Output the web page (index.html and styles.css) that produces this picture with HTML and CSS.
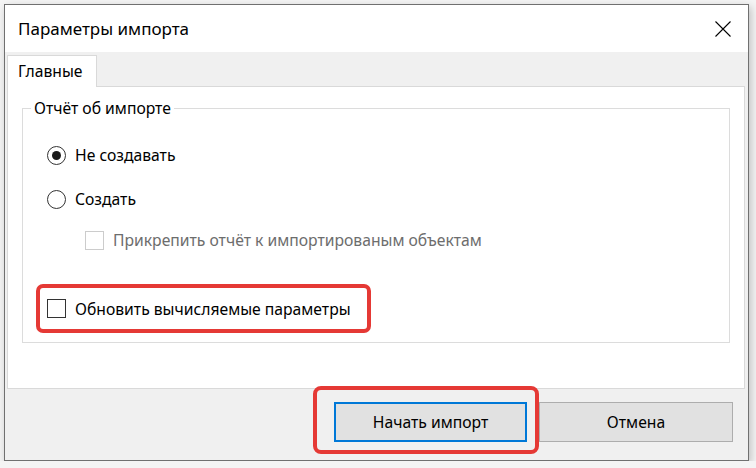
FILE: index.html
```html
<!DOCTYPE html>
<html>
<head>
	<meta charset="UTF-8">
	<title>Параметры импорта</title>
	<link rel="stylesheet" href="styles.css">
</head>
<body>
	<div class="window">
		<div class="titlebar">
			<span class="title">Параметры импорта</span>
			<span class="close">
				<svg width="16" height="16" viewBox="0 0 16 16">
					<path d="M0.5 0.5 L15.5 15.5 M15.5 0.5 L0.5 15.5" stroke="#000" stroke-width="1.1" fill="none"/>
				</svg>
			</span>
		</div>
		<div class="client">
			<div class="tabs">
				<div class="tab">Главные</div>
			</div>
			<div class="panel">
				<fieldset class="group">
					<legend>Отчёт об импорте</legend>
					<div class="row row-first">
						<span class="radio checked"></span>
						<span>Не создавать</span>
					</div>
					<div class="row row-second">
						<span class="radio"></span>
						<span>Создать</span>
					</div>
					<div class="row row-sub disabled">
						<span class="check"></span>
						<span>Прикрепить отчёт к импортированым объектам</span>
					</div>
					<div class="mark mark-row">
						<div class="row">
							<span class="check"></span>
							<span>Обновить вычисляемые параметры</span>
						</div>
					</div>
				</fieldset>
			</div>
			<div class="footer">
				<span class="mark-btn">
					<button type="button" class="btn btn-default">Начать импорт</button>
				</span>
				<button type="button" class="btn">Отмена</button>
			</div>
		</div>
	</div>
</body>
</html>
```

FILE: styles.css
```css
* {
	margin: 0;
	padding: 0;
	box-sizing: border-box;
}

body {
	background-color: #f4f4f4;
	padding: 4px 0 0 4px;
	font-family: "Noto Sans", "Open Sans", sans-serif;
	font-size: 15.7px;
	color: #000;
}

.window {
	width: 745px;
	height: 457px;
	border: 1px solid #707070;
	background-color: #f0f0f0;
	box-shadow: 2px 3px 8px rgba(0, 0, 0, 0.22);
	display: flex;
	flex-direction: column;
}

.titlebar {
	height: 47px;
	background-color: #ffffff;
	display: flex;
	align-items: center;
	justify-content: space-between;
	padding: 0 17px 0 13px;
}

.title {
	font-size: 17px;
}

.close {
	display: flex;
}

.client {
	flex: 1;
	display: flex;
	flex-direction: column;
}

.tabs {
	display: flex;
	padding: 3px 0 0 2px;
}

.tab {
	width: 90px;
	height: 32px;
	margin-bottom: -1px;
	background-color: #ffffff;
	border: 1px solid #d9d9d9;
	border-bottom: none;
	padding: 4px 0 0 10px;
	position: relative;
	z-index: 1;
}

.panel {
	height: 303px;
	margin: 0 3px 0 2px;
	background-color: #ffffff;
	border: 1px solid #d9d9d9;
	padding: 11px 14px 0 14px;
}

.group {
	border: 1px solid #dcdcdc;
	height: 245px;
	padding: 22px 0 0 0;
	min-width: 0;
}

.group legend {
	margin-left: 8px;
	padding: 0 3px;
	line-height: 20px;
}

.row {
	display: flex;
	align-items: center;
	height: 30px;
	padding-left: 24px;
}

.row-second {
	margin-top: 14px;
}

.row-sub {
	margin-top: 11px;
	padding-left: 62px;
}

.disabled {
	color: #6d6d6d;
}

.radio {
	width: 19px;
	height: 19px;
	border: 1.5px solid #333333;
	border-radius: 50%;
	margin-right: 9px;
	display: flex;
	align-items: center;
	justify-content: center;
}

.radio.checked:after {
	content: "";
	width: 9px;
	height: 9px;
	border-radius: 50%;
	background-color: #1a1a1a;
}

.check {
	width: 19px;
	height: 19px;
	border: 1.5px solid #333333;
	background-color: #fff;
	margin-right: 9px;
}

.disabled .check {
	border-color: #cccccc;
}

.mark {
	border: 4px solid #e53935;
	border-radius: 7px;
}

.mark-row {
	width: 335px;
	height: 49px;
	margin: 29px 0 0 13px;
	display: flex;
	align-items: center;
}

.mark-row .row {
	padding-left: 7px;
}

.footer {
	flex: 1;
	display: flex;
	justify-content: flex-end;
	align-items: flex-start;
	gap: 12px;
	padding: 13px 15px 0 0;
}

.btn {
	width: 194px;
	height: 40px;
	background-color: #e1e1e1;
	border: 1px solid #adadad;
	font-family: inherit;
	font-size: 15.7px;
	color: #000;
}

.btn-default {
	width: 193px;
	border: 2px solid #0078d7;
}

.mark-btn {
	position: relative;
	display: flex;
}

.mark-btn:after {
	content: "";
	position: absolute;
	left: -21px;
	right: -12px;
	top: -16px;
	bottom: -12px;
	border: 4px solid #e53935;
	border-radius: 8px;
	pointer-events: none;
}
```
